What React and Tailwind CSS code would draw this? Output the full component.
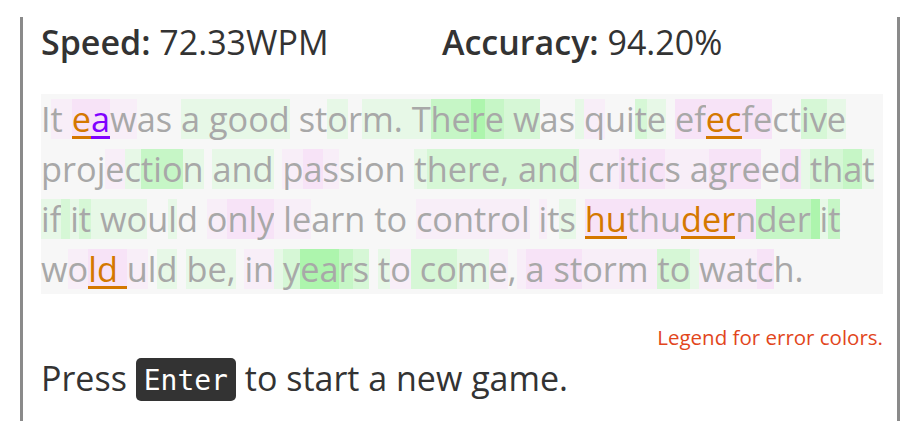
import React from "react";

const BG = {
  N: "",
  G1: "bg-[#e7f8e7]",
  G2: "bg-[#d6f7d6]",
  G3: "bg-[#c6f6c6]",
  G4: "bg-[#adf5ad]",
  P1: "bg-[#f8eef8]",
  P2: "bg-[#f7e3f7]",
};
const ERR = {
  o: "text-[#d47800] border-b-[3px] border-[#d47800]",
  p: "text-[#8000ff] border-b-[3px] border-[#8000ff]",
};

const LINES = [
  [
    ["I", "N"], ["t ", "P1"], ["e", "P2", "o"], ["a", "P2", "p"], ["w", "P1"], ["as ", "N"],
    ["a good", "G1"], [" st", "N"], ["o", "G1"], ["r", "N"], ["m. ", "G1"], ["T", "G1"],
    ["he", "G3"], ["r", "G4"], ["e", "G3"], [" w", "G2"], ["as", "N"], [" ", "G1"],
    ["q", "P1"], ["ui", "N"], ["t", "G2"], ["e", "G1"], [" ", "N"], ["ef", "P2"],
    ["ec", "P2", "o"], ["fe", "P2"], ["ct", "N"], ["iv", "G2"], ["e", "G1"],
  ],
  [
    ["proj", "N"], ["e", "P1"], ["c", "G1"], ["tio", "G3"], ["n", "G1"], [" ", "N"],
    ["and", "G1"], [" ", "N"], ["p", "P1"], ["a", "P2"], ["s", "P1"], ["sion ", "N"],
    ["t", "G1"], ["he", "G2"], ["re,", "G2"], [" and", "G2"], [" ", "P1"], ["cr", "P1"],
    ["itic", "P2"], ["s ", "P1"], ["a", "P1"], ["gre", "P2"], ["e", "N"], ["d", "P2"],
    [" ", "G1"], ["th", "G2"], ["a", "G3"], ["t", "G1"],
  ],
  [
    ["if", "G1"], [" ", "G2"], ["i", "G1"], ["t", "G2"], [" wo", "G1"], ["u", "N"],
    ["l", "G1"], ["d ", "N"], ["o", "P1"], ["nl", "P2"], ["y", "P2"], [" le", "P1"],
    ["arn to ", "N"], ["control", "P1"], [" ", "N"], ["i", "P1"], ["t", "N"], ["s", "G1"],
    [" ", "N"], ["hu", "P2", "o"], ["thu", "P2"], ["der", "P2", "o"], ["n", "P2"],
    ["de", "G3"], ["r", "G3"], [" ", "G4"], ["i", "G1"], ["t", "G3"],
  ],
  [
    ["w", "N"], ["o", "P1"], ["ld ", "P2", "o"], ["u", "P1"], ["l", "N"], ["d", "G1"],
    [" ", "N"], ["be,", "G1"], [" ", "N"], ["in", "P1"], [" ", "G1"], ["y", "G2"],
    ["ea", "G4"], ["r", "G3"], ["s", "G2"], [" ", "N"], ["t", "G1"], ["o", "P1"],
    [" ", "G2"], ["co", "G2"], ["m", "G1"], ["e", "P1"], [",", "N"], [" ", "P1"],
    ["a st", "P2"], ["orm ", "P1"], ["to", "G2"], [" ", "G1"], ["wat", "P1"], ["c", "P2"],
    ["h.", "N"],
  ],
];

export default function App() {
  return (
    <div className="h-[421px] w-[903px] overflow-hidden bg-white font-['Open_Sans',sans-serif]">
      <div className="ml-[20px] h-full w-[880px] border-x-[3px] border-[#8a8a8a] pl-[18px]">
        <div className="mt-[17px] flex h-[50px] items-center text-[34px] leading-[50px] text-[#333]">
          <div className="w-[401px] whitespace-pre">
            <span className="font-semibold">Speed:</span> 72.33WPM
          </div>
          <div className="whitespace-pre">
            <span className="font-semibold">Accuracy:</span> 94.20%
          </div>
        </div>

        <div className="mt-[27px] w-[842px] bg-[#f7f7f7] text-[34.3px] text-[#a8a8a8]">
          {LINES.map((line, i) => (
            <div key={i} className="flex h-[50px] items-center whitespace-pre">
              {line.map(([t, bg, e], j) => (
                <span
                  key={j}
                  className={`h-[40px] leading-[40px] ${BG[bg]} ${e ? ERR[e] : ""}`}
                >
                  {t}
                </span>
              ))}
            </div>
          ))}
        </div>

        <div className="mt-[29px] w-[842px] text-right text-[20.5px] leading-[28px] text-[#e2461c]">
          Legend for error colors.
        </div>

        <div className="mt-[7px] flex items-start whitespace-pre text-[34px] text-[#333]">
          <span className="leading-[40px]">Press </span>
          <kbd className="h-[43px] rounded-[5px] bg-[#333] px-[8px] pt-[3px] font-['DejaVu_Sans_Mono',monospace] text-[28px] leading-[40px] text-white">
            Enter
          </kbd>
          <span className="leading-[40px]"> to start a new game.</span>
        </div>
      </div>
    </div>
  );
}
